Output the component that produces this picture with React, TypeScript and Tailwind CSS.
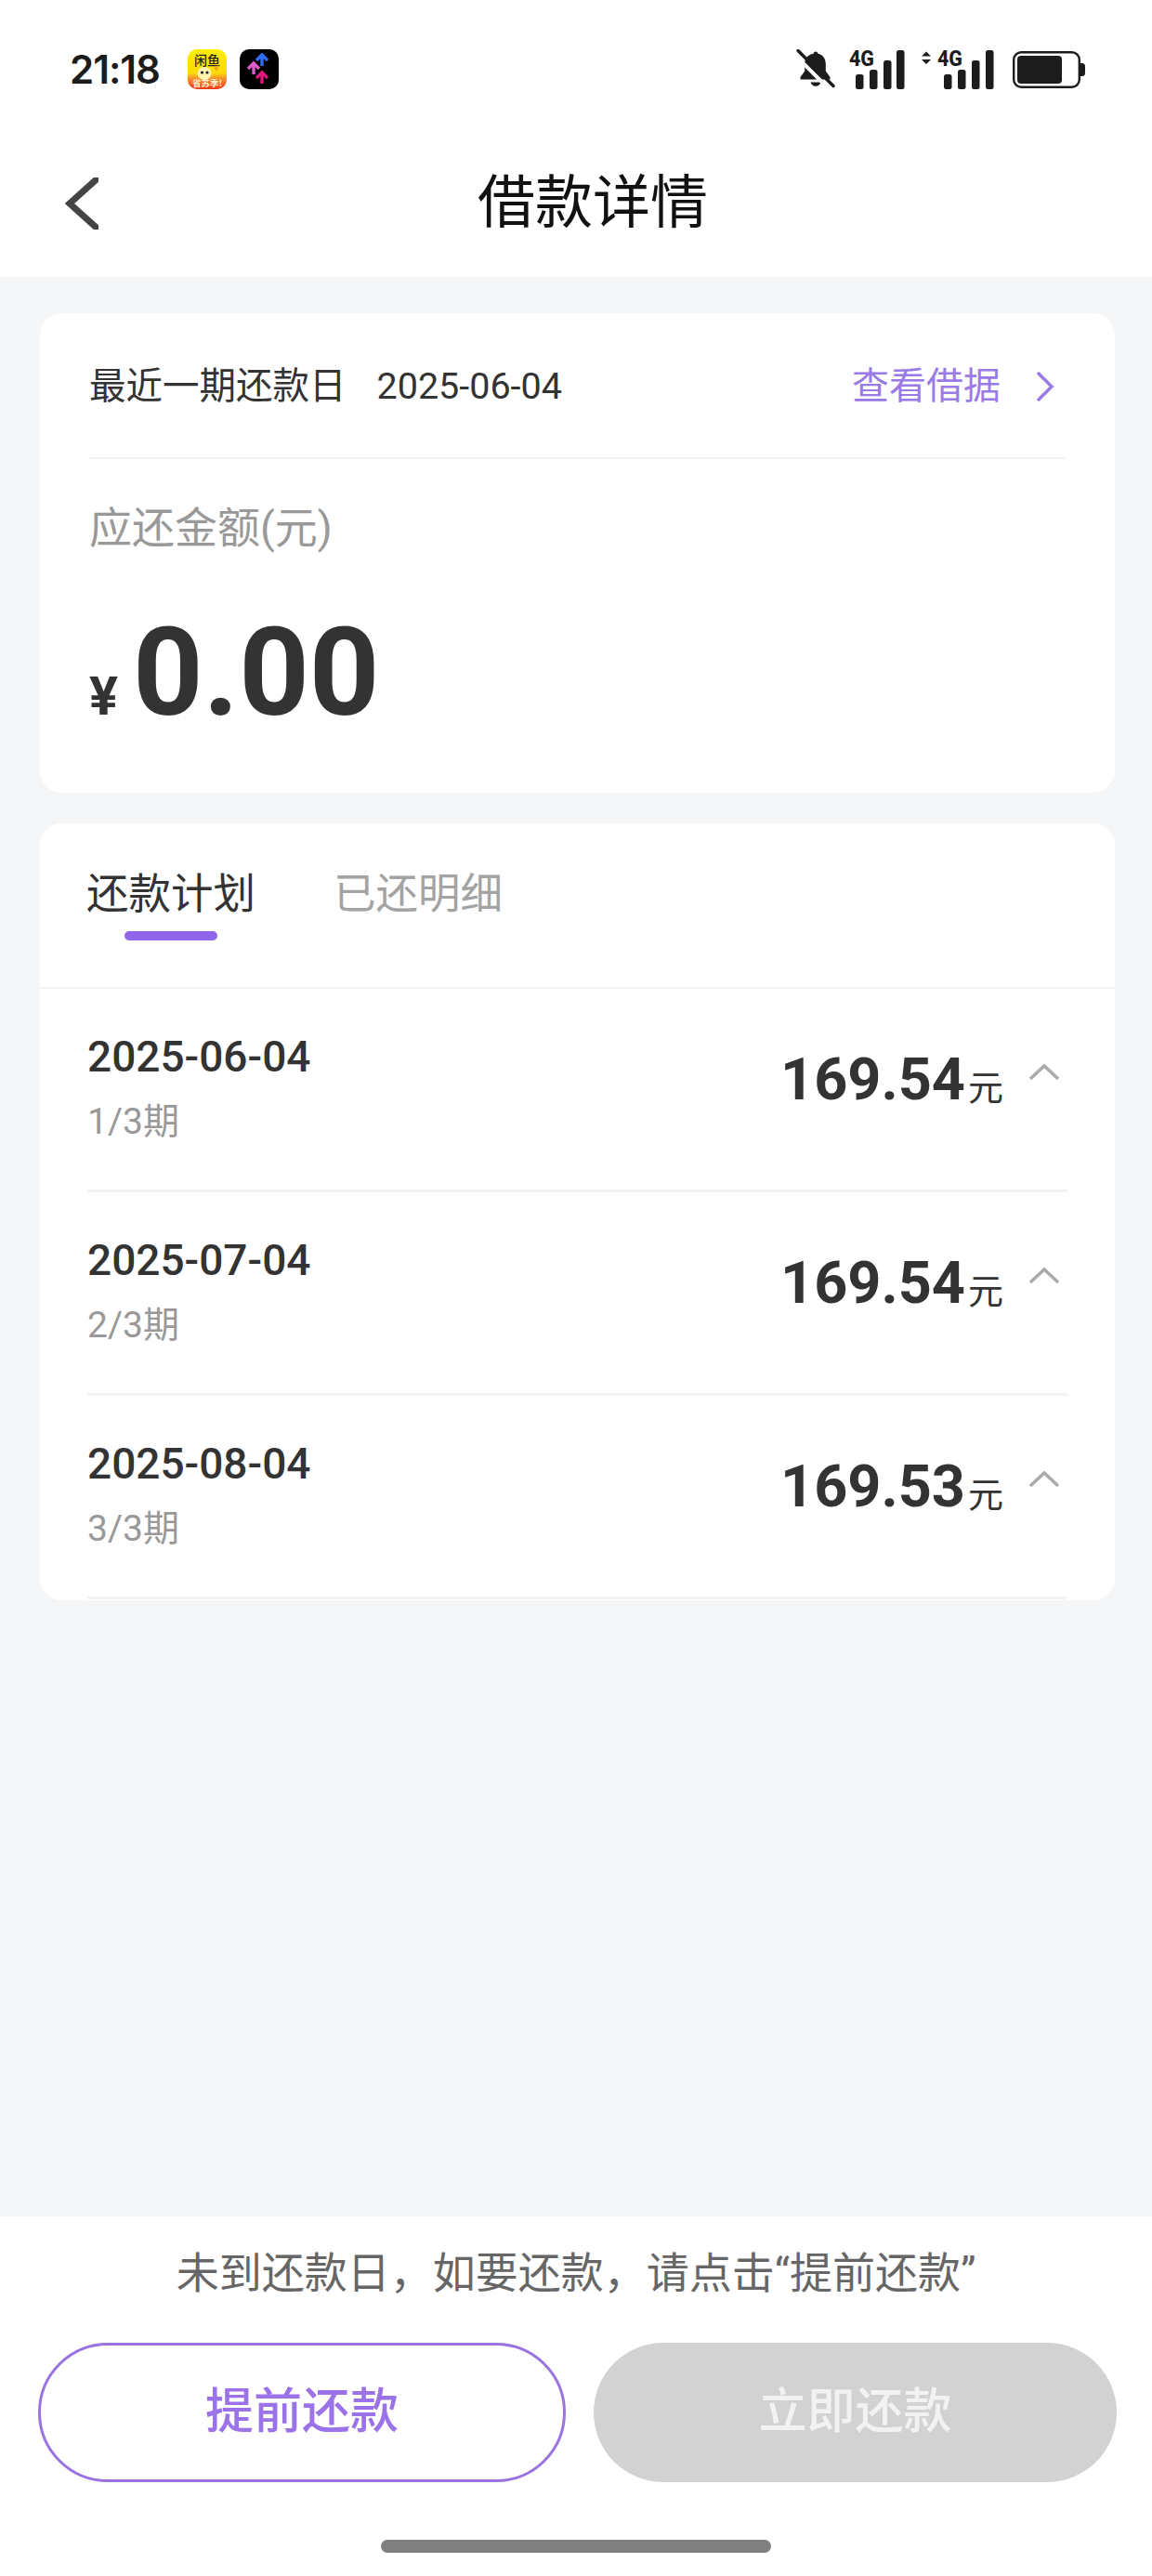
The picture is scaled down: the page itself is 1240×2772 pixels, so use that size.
const rows = [
  { date: "2025-06-04", term: "1/3期", amount: "169.54" },
  { date: "2025-07-04", term: "2/3期", amount: "169.54" },
  { date: "2025-08-04", term: "3/3期", amount: "169.53" },
];

function XianyuIcon() {
  return (
    <svg width="42" height="43" viewBox="0 0 42 43" className="block">
      <defs>
        <linearGradient id="xy" x1="0" y1="0" x2="0" y2="1">
          <stop offset="0" stopColor="#ffee00" />
          <stop offset="0.6" stopColor="#fdd90a" />
          <stop offset="0.72" stopColor="#f9952a" />
          <stop offset="1" stopColor="#ee3a1c" />
        </linearGradient>
      </defs>
      <rect width="42" height="43" rx="10" fill="url(#xy)" />
      <text x="21" y="17" textAnchor="middle" fontSize="14" fontWeight="500" fill="#222" fontFamily="'Noto Sans CJK SC', sans-serif">
        闲鱼
      </text>
      <ellipse cx="18" cy="26" rx="7.5" ry="7" fill="#fff3b0" />
      <circle cx="15.5" cy="25" r="1.6" fill="#222" />
      <circle cx="21" cy="25" r="1.6" fill="#222" />
      <path d="M28 20l5-3-1 7z" fill="#f6a623" />
      <text x="21" y="40" textAnchor="middle" fontSize="9.5" fontWeight="700" fill="#fff3d0" fontFamily="'Noto Sans CJK SC', sans-serif">
        省苏季!
      </text>
    </svg>
  );
}

function ArrowsIcon() {
  const arrow = (x: number, y: number, color: string) => (
    <path d={`M${x} ${y + 13}V${y + 2}M${x - 6} ${y + 7}L${x} ${y + 1}L${x + 6} ${y + 7}`} fill="none" stroke={color} strokeWidth="3.4" />
  );
  return (
    <svg width="42" height="43" viewBox="0 0 42 43" className="block">
      <rect width="42" height="43" rx="10" fill="#000" />
      {arrow(24, 5, "#2f6df2")}
      {arrow(15, 14, "#d95cc8")}
      {arrow(24, 24, "#e2157c")}
    </svg>
  );
}

function MutedBell() {
  return (
    <svg width="42" height="42" viewBox="0 0 42 42" className="block">
      <path d="M21 2.5c1.4 0 2.4 1 2.4 2.3 5.6 1.2 8.4 5.600 8.400 11.200v7.500l4.700 6.500v2.500H4.500V30l4.700-6.500V16c0-5.600 2.800-10 9.400-11.200C18.600 3.500 19.600 2.500 21 2.500z" fill="#1c1c1c" />
      <path d="M15.500 35.500h11c-.6 2.600-2.800 4.200-5.500 4.200s-4.900-1.600-5.500-4.200z" fill="#1c1c1c" />
      <path d="M-2 5.500L32 39.500" stroke="#fff" strokeWidth="4" />
      <path d="M2 1.500L40 39.500" stroke="#1c1c1c" strokeWidth="3.400" strokeLinecap="round" />
    </svg>
  );
}

function Signal({ arrows }: { arrows?: boolean }) {
  const bars = arrows
    ? [
        { x: 24, h: 16 },
        { x: 39, h: 21 },
        { x: 54, h: 31 },
        { x: 69, h: 42 },
      ]
    : [
        { x: 7, h: 16 },
        { x: 22, h: 21 },
        { x: 37, h: 31 },
        { x: 51, h: 42 },
      ];
  const w = arrows ? 78 : 60;
  return (
    <svg width={w} height="43" viewBox={`0 0 ${w} 43`} className="block overflow-visible">
      {arrows && <path d="M0 7.500L5 2.500L10 7.500zM0 11L5 16L10 11z" fill="#1c1c1c" />}
      <text x={arrows ? 17 : 0} y="17.500" fontSize="24" fontWeight="800" textLength="27" lengthAdjust="spacingAndGlyphs" fill="#1c1c1c" fontFamily="Roboto, sans-serif">
        4G
      </text>
      {bars.map((b) => (
        <rect key={b.x} x={b.x} y={43 - b.h} width="8.500" height={b.h} rx="2.500" fill="#1c1c1c" />
      ))}
    </svg>
  );
}

function Battery() {
  return (
    <svg width="78" height="40" viewBox="0 0 78 40" className="block">
      <rect x="1.200" y="1.200" width="70.600" height="37.600" rx="8" fill="none" stroke="#1c1c1c" strokeWidth="2.400" />
      <rect x="5" y="5" width="48" height="30" rx="4" fill="#1c1c1c" />
      <path d="M73 13h1.500a3.500 3.500 0 0 1 3.500 3.500v7a3.500 3.500 0 0 1-3.500 3.500H73z" fill="#1c1c1c" />
    </svg>
  );
}

export default function App() {
  return (
    <div className="flex h-[2772px] flex-col bg-[#f5f6f8] font-[Roboto,'Noto_Sans_CJK_SC',sans-serif] text-[#333]">
      <div className="flex h-[298px] shrink-0 flex-col bg-white">
        <div className="flex h-[145px] items-start justify-between pl-[75px] pr-[72px] pt-[53px]">
          <div className="flex items-center">
            <span className="w-[127px] font-[Inter,sans-serif] text-[42px] leading-[43px] font-semibold tracking-[-1px] text-[#1c1c1c]">21:18</span>
            <div className="flex gap-[14px]">
              <XianyuIcon />
              <ArrowsIcon />
            </div>
          </div>
          <div className="flex items-start">
            <MutedBell />
            <div className="ml-[15px]">
              <Signal />
            </div>
            <div className="ml-[18px]">
              <Signal arrows />
            </div>
            <div className="ml-[20px] mt-[2px]">
              <Battery />
            </div>
          </div>
        </div>
        <div className="flex h-[153px] items-start pl-[70px]">
          <svg width="36" height="56" viewBox="0 0 36 56" className="mt-[46px] block">
            <path d="M36 0L5 28L36 56" fill="none" stroke="#444" strokeWidth="7" />
          </svg>
          <h1 className="ml-[408px] mt-[37px] text-[62px] leading-[74px] font-normal text-[#111]">借款详情</h1>
        </div>
      </div>

      <main className="flex flex-1 flex-col pl-[43px] pr-[40px] pt-[39px]">
        <section className="h-[516px] rounded-[24px] bg-white px-[53px]">
          <div className="flex h-[157px] items-center justify-between border-b-2 border-[#f2f2f2] pt-[2px]">
            <div className="flex items-center text-[39.500px] text-[#333]">
              <span>最近一期还款日</span>
              <span className="ml-[33px]">2025-06-04</span>
            </div>
            <div className="flex items-center text-[40px] text-[#9a7be6]">
              <span>查看借据</span>
              <svg width="24" height="36" viewBox="0 0 24 36" className="ml-[36px] mr-[10px] block">
                <path d="M4 3L19 18L4 33" fill="none" stroke="#9a7be6" strokeWidth="3.500" />
              </svg>
            </div>
          </div>
          <p className="mt-[47px] text-[46px] leading-[54px] text-[#999]">应还金额(元)</p>
          <div className="mt-[49px] flex items-baseline font-bold text-[#333]">
            <span className="text-[58px] leading-none">¥</span>
            <span className="ml-[16px] text-[132px] leading-[160px]">0.00</span>
          </div>
        </section>

        <section className="mt-[33px] h-[836px] rounded-[24px] bg-white">
          <div className="flex h-[178px] gap-[84px] border-b-2 border-[#f2f2f2] pl-[50px] pt-[47px] text-[45.500px] leading-[60px]">
            <div className="flex flex-col items-center">
              <span>还款计划</span>
              <span className="mt-[9px] h-[10px] w-[100px] rounded-full bg-[#8f66ea]"></span>
            </div>
            <span className="text-[#a3a3a3]">已还明细</span>
          </div>
          {rows.map((row) => (
            <div key={row.date} className="mx-[51px] flex h-[219px] justify-between border-b-[3px] border-[#f3f3f3] pt-[46px]">
              <div>
                <div className="text-[46px] leading-[54px] font-medium">{row.date}</div>
                <div className="mt-[18px] text-[39px] leading-[50px] text-[#999]">{row.term}</div>
              </div>
              <div className="flex items-start pt-[15px]">
                <span className="text-[63px] leading-[74px] font-bold">{row.amount}</span>
                <span className="ml-[3px] mt-[23px] text-[38px] leading-[46px]">元</span>
                <svg width="34" height="20" viewBox="0 0 34 20" className="ml-[27px] mr-[8px] mt-[19px] block">
                  <path d="M2 17L17 3L32 17" fill="none" stroke="#aaa" strokeWidth="3.500" />
                </svg>
              </div>
            </div>
          ))}
        </section>
      </main>

      <footer className="flex h-[387px] shrink-0 flex-col bg-white">
        <p className="mt-[33px] text-center text-[46px] leading-[56px] text-[#666]">未到还款日，如要还款，请点击“提前还款”</p>
        <div className="mt-[47px] flex gap-[30px] pl-[41px] pr-[38px]">
          <button className="h-[150px] w-[568px] rounded-full border-[3px] border-[#9a73e0] bg-white text-[52px] font-medium text-[#9b72e8]">提前还款</button>
          <button className="h-[150px] flex-1 rounded-full bg-[#d2d2d2] text-[52px] font-medium text-[#f2f2f2]">立即还款</button>
        </div>
        <div className="mx-auto mt-[62px] h-[14px] w-[420px] rounded-full bg-[#808080]"></div>
      </footer>
    </div>
  );
}
